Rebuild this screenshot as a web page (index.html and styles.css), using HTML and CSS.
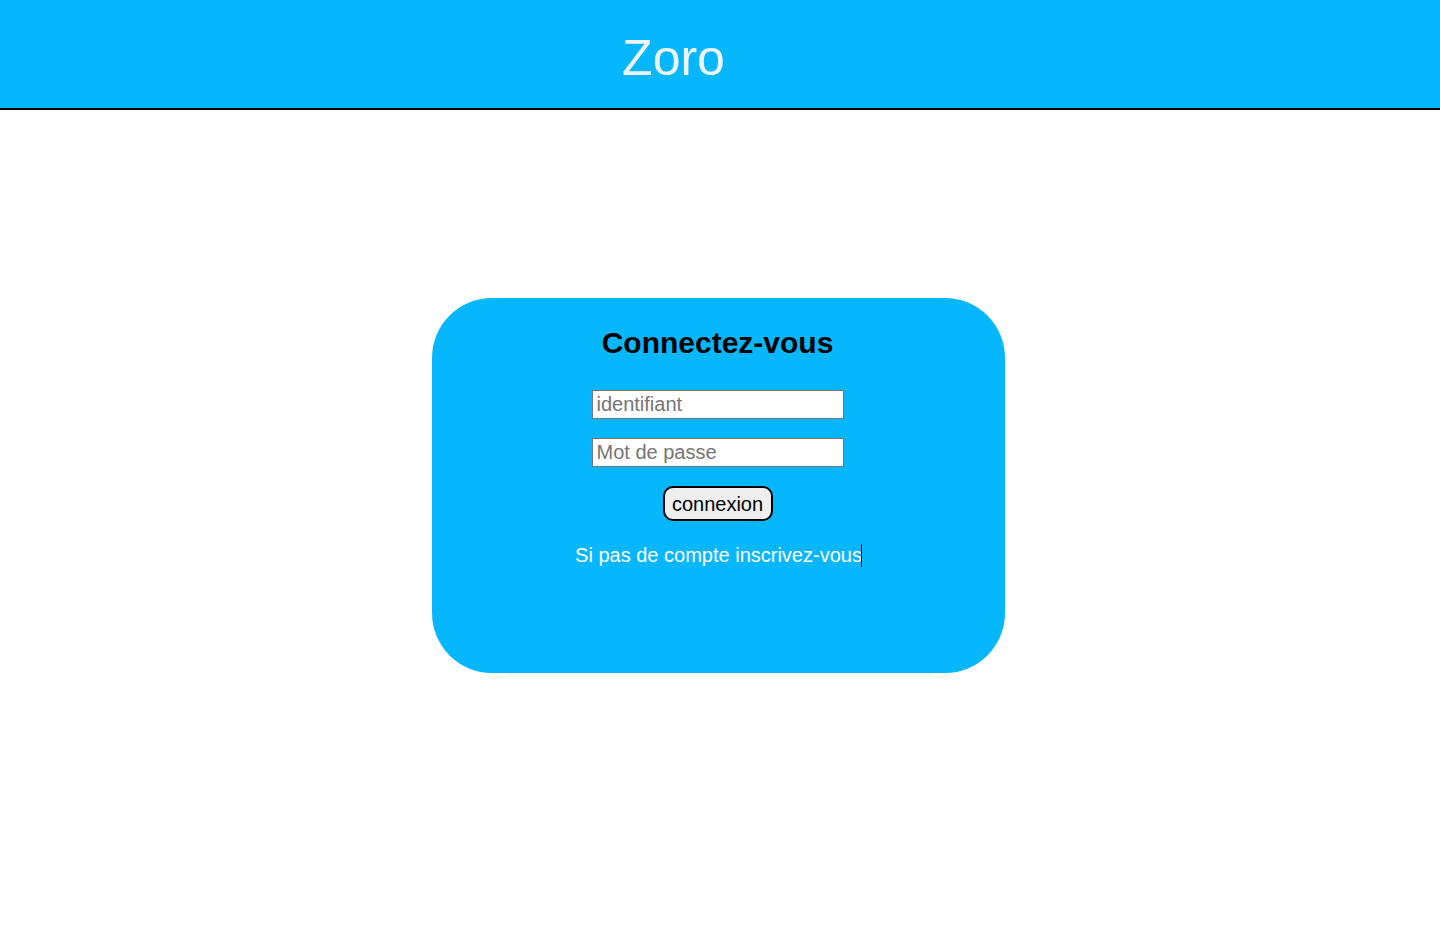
FILE: index.html
```html
<!DOCTYPE html>
<html lang="fr">
<head>
<meta charset="utf-8">
<title>Zoro</title>
<link rel="stylesheet" href="styles.css">
</head>
<body>
<header class="topbar">
  <h1 class="brand">Zoro</h1>
</header>
<main class="page">
  <form class="card">
    <h2 class="card-title">Connectez-vous</h2>
    <input class="field" type="text" placeholder="identifiant">
    <input class="field" type="password" placeholder="Mot de passe">
    <button class="submit" type="button">connexion</button>
    <p class="signup">Si pas de compte inscrivez-vous<span class="caret"></span></p>
  </form>
</main>
</body>
</html>
```

FILE: styles.css
```css
html, body {
  margin: 0;
  padding: 0;
  background: #ffffff;
  font-family: "Liberation Sans", Arial, sans-serif;
}

.topbar {
  background: #07b7fe;
  height: 108px;
  border-bottom: 2px solid #000000;
  display: flex;
  justify-content: center;
  padding-right: 93px;
}

.brand {
  margin: 0;
  padding-top: 30px;
  font-size: 50px;
  font-weight: normal;
  line-height: 57px;
  color: #eef3f7;
}

.page {
  display: flex;
  justify-content: center;
  padding-top: 188px;
  padding-right: 3px;
}

.card {
  width: 573px;
  height: 375px;
  box-sizing: border-box;
  background: #07b7fe;
  border-radius: 60px;
  display: flex;
  flex-direction: column;
  align-items: center;
  padding-top: 28px;
  padding-right: 2px;
}

.card-title {
  margin: 0 0 30px 0;
  font-size: 30px;
  line-height: 34px;
  font-weight: bold;
  color: #000000;
}

.field {
  width: 252px;
  height: 29px;
  box-sizing: border-box;
  border: 1px solid #767676;
  padding: 1px 4px;
  margin: 0 0 19px 0;
  font-family: "Liberation Sans", Arial, sans-serif;
  font-size: 20px;
  background: #ffffff;
  color: #000000;
}

.field::placeholder {
  color: #757575;
}

.submit {
  width: 110px;
  height: 35px;
  box-sizing: border-box;
  border: 2px solid #000000;
  border-radius: 10px;
  background: #efefef;
  font-family: "Liberation Sans", Arial, sans-serif;
  font-size: 20px;
  color: #000000;
  padding: 1px 0 0 0;
  margin: 0;
}

.signup {
  margin: 23px 0 0 0;
  font-size: 20px;
  line-height: 23px;
  color: #ffffff;
  padding-left: 2px;
}

.caret {
  display: inline-block;
  width: 1px;
  height: 23px;
  background: #000000;
  vertical-align: top;
  margin-left: -1px;
}
```
